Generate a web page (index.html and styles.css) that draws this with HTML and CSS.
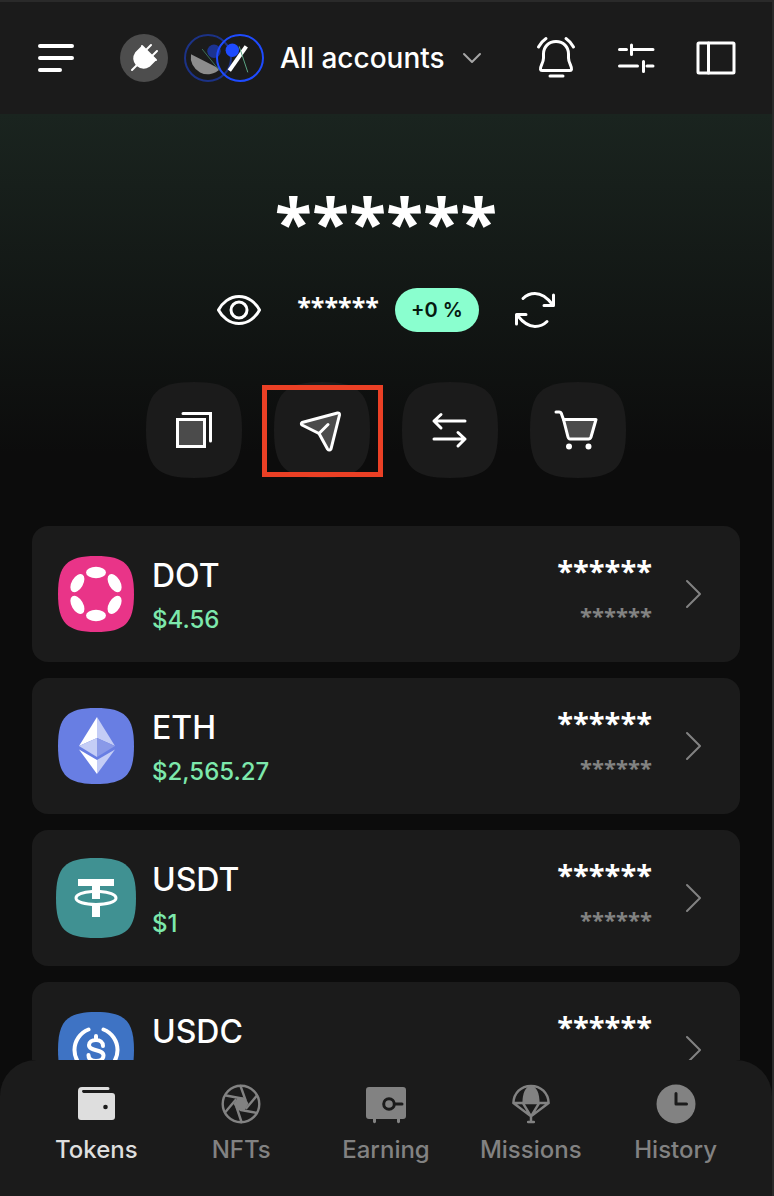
FILE: index.html
```html
<!DOCTYPE html>
<html lang="en">
<head>
<meta charset="UTF-8" />
<meta name="viewport" content="width=device-width, initial-scale=1" />
<title>Wallet</title>
<link rel="stylesheet" href="styles.css">
</head>
<body>
  <header class="topbar">
    <button class="icon-btn" aria-label="Menu">
      <svg width="40" height="40" viewBox="0 0 40 40" stroke-width="4">
        <path d="M4 8h32M4 20h32M4 32h20" />
      </svg>
    </button>
    <button class="icon-btn plug-btn" aria-label="Connection">
      <svg width="48" height="48" viewBox="0 0 48 48" stroke-width="2">
        <path class="fill" d="M22 12 36 26 M22 13 35 26 29 32Q23 36 17 31 12 25 16 19Z" />
        <path d="M26 16l5-5M32 22l5-5M12 36l7-7" />
      </svg>
    </button>
    <button class="account-select">
      <svg width="80" height="48" viewBox="0 0 80 48">
        <circle cx="24" cy="24" r="23" stroke="#1c3286" stroke-width="2" />
        <path d="M7 20.3A17 17 0 0 0 36 35Z" fill="#8d8d8d" stroke="none" />
        <circle cx="30" cy="17.3" r="6.7" fill="#1c3391" stroke="none" />
        <path d="M18.3 15.3 35 36" stroke="#3c6f57" stroke-width="1" />
        <circle cx="56" cy="24" r="23" stroke="#1e4bff" stroke-width="2" />
        <path d="M45.3 36.7 62.3 12.3" stroke="#fff" stroke-width="4" stroke-linecap="butt" />
        <path d="M55.3 12.7 63.7 38" stroke="#5aa382" stroke-width="1" />
        <circle cx="48.3" cy="16.3" r="6.7" fill="#1e4bff" stroke="none" />
      </svg>
      <span>All accounts</span>
      <svg class="muted" width="24" height="24" viewBox="0 0 24 24" stroke-width="2"><path d="M3 8l8 8 8-8" /></svg>
    </button>
    <div class="topbar-actions">
      <button class="icon-btn" aria-label="Notifications">
        <svg width="40" height="44" viewBox="0 0 40 44" stroke-width="3">
          <path d="M20 5.500C12.500 5.500 7.500 11 7.500 18v4c0 5-3.500 8-3 11.500q.2 1 1.500 1h28q1.300 0 1.500-1c.5-3.500-3-6.500-3-11.500v-4C32.500 11 27.500 5.500 20 5.500Z" />
          <path d="M14 40h13M2.500 11Q5 6 10 2.500M37.500 11Q35 6 30 2.500" />
        </svg>
      </button>
      <button class="icon-btn" aria-label="Customize">
        <svg width="40" height="40" viewBox="0 0 40 40" stroke-width="3">
          <path d="M3.500 11.500h7M16 11.500h21M15.500 7v9.500M3.500 28h18M31 28h6M27.500 23.500v10" />
        </svg>
      </button>
      <button class="icon-btn" aria-label="Side panel">
        <svg width="40" height="40" viewBox="0 0 40 40" stroke-width="3">
          <rect x="2" y="5" width="36" height="30" rx="1" />
          <path d="M12.500 5v30" />
        </svg>
      </button>
    </div>
  </header>

  <main class="content">
    <section class="balance">
      <h1 class="total masked">******</h1>
      <div class="change-row">
        <button class="icon-btn" aria-label="Show balance">
          <svg width="44" height="32" viewBox="0 0 44 32" stroke-width="3">
            <path d="M1.500 16C5 9 12.500 2.500 22 2.500S39 9 42.500 16C39 23 31.500 29.500 22 29.500S5 23 1.500 16Z" />
            <circle cx="22" cy="16" r="8" />
          </svg>
        </button>
        <div class="change">
          <span class="change-value masked">******</span>
          <span class="pill">+0 %</span>
        </div>
        <button class="icon-btn" aria-label="Refresh">
          <svg width="40" height="40" viewBox="0 0 40 40" stroke-width="3">
            <path d="M8 8.500Q13 3.500 20 3.500c7 0 12 4 17.500 11M38.500 5v10.500H29M32 31.500Q27 36.500 20 36.500c-7 0-12-4-17.500-11M1.500 34V24.500H11" />
          </svg>
        </button>
      </div>
      <div class="actions">
        <button class="action" aria-label="Receive">
          <svg class="squircle" viewBox="0 0 96 96"><path d="M0 48C0 11 11 0 48 0S96 11 96 48 85 96 48 96 0 85 0 48Z" /></svg>
          <svg class="glyph" width="48" height="48" viewBox="0 0 48 48" stroke-width="3">
            <path class="shade" stroke-linejoin="miter" d="M7.500 13.500h27v27h-27z" />
            <path stroke-linejoin="miter" d="M13 7.500h27.500V35" />
          </svg>
        </button>
        <button class="action highlighted" aria-label="Send">
          <svg class="squircle" viewBox="0 0 96 96"><path d="M0 48C0 11 11 0 48 0S96 11 96 48 85 96 48 96 0 85 0 48Z" /></svg>
          <svg class="glyph" width="48" height="48" viewBox="0 0 48 48" stroke-width="3">
            <path class="shade" d="M4 16.500 39.500 7q2.200-.3 2 2L33 43q-1.700 2-3.500 0L21 27.500 4 19q-1.300-1.300 0-2.500Z" />
            <path d="M21 27.500l9-9" />
          </svg>
        </button>
        <button class="action" aria-label="Swap">
          <svg class="squircle" viewBox="0 0 96 96"><path d="M0 48C0 11 11 0 48 0S96 11 96 48 85 96 48 96 0 85 0 48Z" /></svg>
          <svg class="glyph" width="48" height="48" viewBox="0 0 48 48" stroke-width="3">
            <path d="M39 15H8M15 8.500 8 15l7 7M8 33h31M32 26.500l7 6.500-7 7" />
          </svg>
        </button>
        <button class="action" aria-label="Buy">
          <svg class="squircle" viewBox="0 0 96 96"><path d="M0 48C0 11 11 0 48 0S96 11 96 48 85 96 48 96 0 85 0 48Z" /></svg>
          <svg class="glyph" width="48" height="48" viewBox="0 0 48 48" stroke-width="3">
            <path class="shade" d="M9.500 13.500H42L37 31q-.7 2-2.500 2H16q-1.500 0-2-2Z" />
            <path d="M2 6h3q2 0 2.500 2l2 5.500" />
            <circle class="fill" cx="15" cy="40.500" r="1.500" />
            <circle class="fill" cx="34.500" cy="40.500" r="1.500" />
          </svg>
        </button>
      </div>
    </section>

    <ul class="tokens">
      <li>
        <a class="token" href="#dot">
          <svg class="token-icon" viewBox="0 0 76 76">
            <path d="M0 38C0 9 9 0 38 0S76 9 76 38 67 76 38 76 0 67 0 38Z" fill="#e93488" />
            <g fill="#fff">
              <ellipse cx="38" cy="16.500" rx="10" ry="5.700" />
              <ellipse cx="38" cy="59.500" rx="10" ry="5.700" />
              <ellipse cx="19.400" cy="27.200" rx="10" ry="5.700" transform="rotate(-60 19.400 27.200)" />
              <ellipse cx="56.600" cy="48.800" rx="10" ry="5.700" transform="rotate(-60 56.600 48.800)" />
              <ellipse cx="56.600" cy="27.200" rx="10" ry="5.700" transform="rotate(60 56.600 27.200)" />
              <ellipse cx="19.400" cy="48.800" rx="10" ry="5.700" transform="rotate(60 19.400 48.800)" />
            </g>
          </svg>
          <span class="token-info"><span class="token-name">DOT</span><span class="token-price">$4.56</span></span>
          <span class="token-balance masked"><span class="amount">******</span><span class="value">******</span></span>
          <svg class="chevron" width="24" height="32" viewBox="0 0 24 32" stroke-width="2"><path d="M5 3l13 13L5 29" /></svg>
        </a>
      </li>
      <li>
        <a class="token" href="#eth">
          <svg class="token-icon" viewBox="0 0 76 76">
            <path d="M0 38C0 9 9 0 38 0S76 9 76 38 67 76 38 76 0 67 0 38Z" fill="#687ee3" />
            <path d="M39 9 21 38l18-8Z" fill="#fff" />
            <path d="M39 9v21l18 8Z" fill="#c4cdf6" />
            <path d="M21 38l18-8v19Z" fill="#c4cdf6" />
            <path d="M57 38l-18-8v19Z" fill="#8999e8" />
            <path d="M21 41.500 39 52v14Z" fill="#fff" />
            <path d="M57 41.500 39 52v14Z" fill="#c4cdf6" />
          </svg>
          <span class="token-info"><span class="token-name">ETH</span><span class="token-price">$2,565.27</span></span>
          <span class="token-balance masked"><span class="amount">******</span><span class="value">******</span></span>
          <svg class="chevron" width="24" height="32" viewBox="0 0 24 32" stroke-width="2"><path d="M5 3l13 13L5 29" /></svg>
        </a>
      </li>
      <li>
        <a class="token" href="#usdt">
          <svg class="token-icon large" viewBox="0 0 80 80">
            <path d="M0 40C0 9 9 0 40 0S80 9 80 40 71 80 40 80 0 71 0 40Z" fill="#409192" />
            <path d="M22 21h36v7H44v13h-8V28H22ZM36 47h8v12h-8Z" fill="#fff" />
            <path d="M36 33.500C27 34 20 36.500 20 40c0 4 9 6.500 20 6.500S60 44 60 40c0-3.500-7-6-16-6.500" fill="none" stroke="#fff" stroke-width="3" />
          </svg>
          <span class="token-info"><span class="token-name">USDT</span><span class="token-price">$1</span></span>
          <span class="token-balance masked"><span class="amount">******</span><span class="value">******</span></span>
          <svg class="chevron" width="24" height="32" viewBox="0 0 24 32" stroke-width="2"><path d="M5 3l13 13L5 29" /></svg>
        </a>
      </li>
      <li>
        <a class="token" href="#usdc">
          <svg class="token-icon" viewBox="0 0 76 76">
            <path d="M0 38C0 9 9 0 38 0S76 9 76 38 67 76 38 76 0 67 0 38Z" fill="#3e73c4" />
            <g fill="none" stroke="#fff" stroke-width="4">
              <path d="M30.500 17.500a22 22 0 0 0 0 41M45.500 17.500a22 22 0 0 1 0 41" />
              <path d="M45 34c0-4-3-6-7-6s-7 2-7 5c0 7 14.500 3.500 14.500 10.500 0 3.500-3 5.500-7.500 5.500s-7.500-2-7.500-6M38 24v4M38 49v4" />
            </g>
          </svg>
          <span class="token-info"><span class="token-name">USDC</span></span>
          <span class="token-balance masked"><span class="amount">******</span></span>
          <svg class="chevron" width="24" height="32" viewBox="0 0 24 32" stroke-width="2"><path d="M5 3l13 13L5 29" /></svg>
        </a>
      </li>
    </ul>
  </main>

  <nav class="tabbar">
    <a class="tab active" href="#tokens">
      <svg width="40" height="40" viewBox="0 0 40 40">
        <path class="fill" d="M6 3h26a1.500 1.500 0 0 1 0 3H7.500q-1.500 0-1.500 1.300T7.500 9H36q3 0 3 3v21q0 3-3 3H5q-3 0-3-3V7q0-4 4-4Z" />
        <circle class="hole" cx="29.500" cy="23" r="2.300" />
      </svg>
      <span>Tokens</span>
    </a>
    <a class="tab" href="#nfts">
      <svg width="40" height="40" viewBox="0 0 40 40" stroke-width="2.400">
        <circle cx="20" cy="20" r="18.300" />
        <path class="fill" stroke="none" d="M17 13.500h7l3.500 6-4 7h-7l-4-6.500Z" />
        <path d="M19.500 2l5 14M36 11.500 25.500 24M36 29l-16-3M20.500 38l-5-15M4 28.500 14.500 16M5 11.500l16 3" />
      </svg>
      <span>NFTs</span>
    </a>
    <a class="tab" href="#earning">
      <svg width="40" height="40" viewBox="0 0 40 40">
        <path class="fill" d="M3 3h34q3 0 3 3v26q0 3-3 3h-3v3q-1.500 2.500-3 0v-3H10v3q-1.500 2.500-3 0v-3H3q-3 0-3-3V6q0-3 3-3Z" />
        <circle class="cut" cx="23" cy="20" r="5.300" />
        <path class="cut" d="M29 20h7" />
      </svg>
      <span>Earning</span>
    </a>
    <a class="tab" href="#missions">
      <svg width="40" height="42" viewBox="0 0 40 42" stroke-width="2.600">
        <path d="M1.500 20C2 9.500 9.500 2 20 2S38 9.500 38.500 20ZM1.500 20 20 34 38.500 20M11.500 20 20 34l8.500-14M20 33v7M17 40h6" />
        <path class="fill" d="M11 20C11 10 14 2 20 2s9 8 9 18Z" />
      </svg>
      <span>Missions</span>
    </a>
    <a class="tab" href="#history">
      <svg width="40" height="40" viewBox="0 0 40 40">
        <circle class="fill" cx="20" cy="20" r="19.500" />
        <path class="cut" d="M20 9.500V20h10.500" />
      </svg>
      <span>History</span>
    </a>
  </nav>
</body>
</html>
```
FILE: styles.css
```css
:root {
  --bg: #0c0c0c;
  --surface: #1b1b1b;
  --edge: #2a2a2a;
  --text: #ffffff;
  --muted: #828282;
  --green: #7de8ac;
  --mint: #8affcf;
  --highlight: #eb4025;
}
* {
  box-sizing: border-box;
}
body {
  margin: 0;
  height: 100vh;
  display: flex;
  flex-direction: column;
  background: var(--bg);
  color: var(--text);
  font-family: Inter, "Liberation Sans", sans-serif;
  border-top: 2px solid var(--edge);
  border-right: 2px solid var(--edge);
}
button {
  padding: 0;
  border: none;
  background: none;
  color: inherit;
  font: inherit;
  cursor: pointer;
}
a {
  color: inherit;
  text-decoration: none;
}
svg {
  display: block;
  flex: none;
  fill: none;
  stroke: currentColor;
  stroke-linecap: round;
  stroke-linejoin: round;
}
.fill {
  fill: currentColor;
}
.shade {
  fill: #4b4b4b;
}
/* hidden amounts */
.masked {
  font-family: "Open Sans", "Noto Sans", sans-serif;
  font-weight: 700;
}

/* top bar */
.topbar {
  flex: none;
  display: flex;
  align-items: center;
  height: 112px;
  padding: 0 36px;
  background: var(--surface);
}
.plug-btn {
  margin: 0 16px 0 44px;
  border-radius: 50%;
  background: #4d4d4d;
}
.account-select {
  display: flex;
  align-items: center;
  gap: 16px;
  font-size: 28px;
  font-weight: 500;
  white-space: nowrap;
}
.account-select .muted {
  color: #a6a6a6;
}
.topbar-actions {
  display: flex;
  align-items: center;
  gap: 40px;
  margin-left: auto;
}

/* balance */
.content {
  flex: 1;
  min-height: 0;
  overflow: hidden;
  background: linear-gradient(#1a241f, var(--bg) 340px);
}
.balance {
  display: flex;
  flex-direction: column;
  align-items: center;
  padding-top: 72px;
}
.total {
  margin: 0;
  height: 80px;
  font-size: 68px;
  line-height: 72px;
}
.change-row {
  display: flex;
  align-items: center;
  gap: 36px;
  margin-top: 22px;
}
.change {
  display: flex;
  align-items: center;
  gap: 16px;
}
.change-value {
  padding-bottom: 8px;
  font-size: 25px;
  line-height: 32px;
}
.pill {
  height: 44px;
  padding: 0 16px;
  border-radius: 22px;
  background: var(--mint);
  color: #06190f;
  font-size: 20px;
  line-height: 44px;
  font-weight: 600;
}
.actions {
  display: flex;
  gap: 32px;
  margin-top: 50px;
}
.action {
  position: relative;
  display: grid;
  place-items: center;
  width: 96px;
  height: 96px;
}
.action svg {
  grid-area: 1 / 1;
}
.squircle {
  width: 96px;
  height: 96px;
  fill: var(--surface);
  stroke: none;
}
.highlighted::after {
  content: "";
  position: absolute;
  inset: 3px -13px 1px -12px;
  border: 5px solid var(--highlight);
}

/* token list */
.tokens {
  display: grid;
  gap: 16px;
  margin: 0;
  padding: 48px 32px 16px;
  list-style: none;
}
.token {
  display: flex;
  align-items: center;
  height: 136px;
  padding: 0 34px 0 26px;
  border-radius: 16px;
  background: var(--surface);
}
.token-icon {
  width: 76px;
  height: 76px;
  stroke: none;
}
.token-icon.large {
  width: 80px;
  height: 80px;
  margin: 0 -2px;
}
.token-info,
.token-balance {
  display: grid;
  grid-template-rows: 40px 40px;
  gap: 4px;
  line-height: 40px;
}
.token-info {
  margin-left: 18px;
  padding-top: 8px;
  font-weight: 500;
}
.token-name {
  font-size: 32px;
}
.token-price {
  color: var(--green);
  font-size: 24px;
}
.token-balance {
  margin-left: auto;
  padding-bottom: 2px;
  text-align: right;
}
.amount {
  font-size: 29px;
}
.value {
  color: var(--muted);
  font-size: 22px;
}
.chevron {
  margin-left: 30px;
  color: var(--muted);
}

/* bottom tabs */
.tabbar {
  flex: none;
  display: grid;
  grid-template-columns: repeat(5, 1fr);
  height: 136px;
  padding: 24px 24px 0;
  border-radius: 36px 36px 0 0;
  background: var(--surface);
}
.tab {
  display: flex;
  flex-direction: column;
  align-items: center;
  gap: 10px;
  color: var(--muted);
  font-size: 24px;
  line-height: 32px;
  font-weight: 500;
}
.tab svg {
  height: 40px;
}
.tab.active {
  color: #dedede;
}
.tab .fill {
  stroke: none;
}
.tab .hole {
  fill: var(--surface);
  stroke: none;
}
.cut {
  stroke: var(--surface);
  stroke-width: 3;
}
```
